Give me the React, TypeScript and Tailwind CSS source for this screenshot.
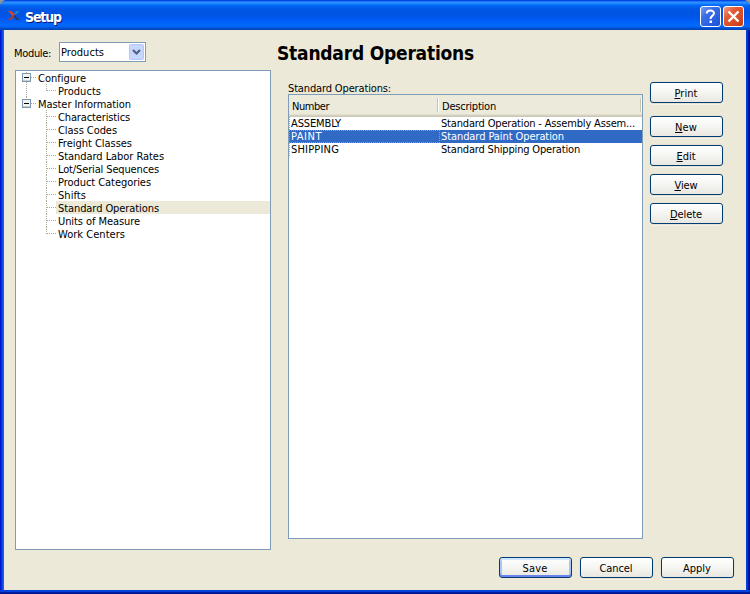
import React from "react";

type FitProps = { w: number; children: React.ReactNode; className?: string };

// Spreads letters evenly so that a label takes up its nominal width.
function Fit({ w, children, className = "" }: FitProps) {
  const ref = React.useRef<HTMLSpanElement>(null);
  const [spacing, setSpacing] = React.useState(0);
  React.useLayoutEffect(() => {
    const el = ref.current;
    if (!el) return;
    const count = (el.textContent ?? "").length;
    setSpacing((w - el.getBoundingClientRect().width) / count);
  }, [w]);
  return (
    <span ref={ref} className={`inline-block whitespace-pre ${className}`} style={{ letterSpacing: spacing }}>
      {children}
    </span>
  );
}

const children: [string, number][] = [
  ["Characteristics", 72],
  ["Class Codes", 59],
  ["Freight Classes", 74],
  ["Standard Labor Rates", 106],
  ["Lot/Serial Sequences", 101],
  ["Product Categories", 93],
  ["Shifts", 28],
  ["Standard Operations", 101],
  ["Units of Measure", 82],
  ["Work Centers", 67],
];

function Group({ label, w, first }: { label: string; w: number; first?: boolean }) {
  return (
    <div className="flex h-[13px]">
      <svg width="22" height="13" className="shrink-0" shapeRendering="crispEdges">
        <path d={first ? "M10.5 1V13" : "M10.5 0V3"} stroke="#aca899" strokeDasharray="1 1" />
        <path d="M15 6.5H20" stroke="#aca899" strokeDasharray="1 1" />
        <rect x="6.5" y="2.5" width="8" height="8" fill="#f4f2ed" stroke="#7898b5" />
        <path d="M7 9.5H14" stroke="#d2cdbf" />
        <path d="M8 6.5H13" stroke="#000" />
      </svg>
      <div className="pt-px">
        <Fit w={w}>{label}</Fit>
      </div>
    </div>
  );
}

function Leaf({ label, w, last, root, selected }: { label: string; w: number; last?: boolean; root?: boolean; selected?: boolean }) {
  return (
    <div className="flex h-[13px]">
      <svg width="40" height="13" className="shrink-0" shapeRendering="crispEdges">
        {root && <path d="M10.5 0V13" stroke="#aca899" strokeDasharray="1 1" />}
        <path d={last ? "M30.5 0V7" : "M30.5 0V13"} stroke="#aca899" strokeDasharray="1 1" />
        <path d="M31 6.5H40" stroke="#aca899" strokeDasharray="1 1" />
      </svg>
      <div className={`h-[13px] grow pl-[2px] pt-px ${selected ? "bg-[#ece9d8]" : ""}`}>
        <Fit w={w}>{label}</Fit>
      </div>
    </div>
  );
}

function Button({ label, w, underline, focus }: { label: string; w: number; underline?: boolean; focus?: boolean }) {
  return (
    <button
      className={`flex h-[21px] w-[73px] shrink-0 justify-center rounded-[3px] border border-[#003c74] bg-linear-to-b from-white via-[#f5f5f2] to-[#e9e7e0] pt-[4px] leading-[13px] ${
        focus
          ? "shadow-[inset_0_2px_0_#cee7ff,inset_0_-2px_0_#6982ee,inset_2px_0_0_#a9c5f5,inset_-2px_0_0_#a9c5f5]"
          : "shadow-[0_0_0_1px_#e6e3d4,0_1px_0_1px_#f4f2e8]"
      }`}
    >
      <Fit w={w} className="-ml-px">
        {underline ? (
          <>
            <span className="underline decoration-1 underline-offset-[1px]">{label[0]}</span>
            {label.slice(1)}
          </>
        ) : (
          label
        )}
      </Fit>
    </button>
  );
}

function TitleBar() {
  return (
    <div className="flex h-[30px] shrink-0 items-start rounded-t-[7px] bg-[linear-gradient(to_bottom,#0831d9_0,#0058ee_1px,#3593ff_2px,#288eff_3px,#127dff_4px,#036ffc_5px,#0262ee_6px,#0057e5_9px,#0054e3_14px,#0055eb_17px,#005bf5_20px,#026afe_25px,#0062ef_27px,#0052d6_28px,#0040ab_30px)]">
      <svg width="14" height="12" viewBox="0 0 14 12" className="ml-[7px] mt-[10px]">
        <path d="M1 1H4.5L8 4.5L6 6.5Z" fill="#d0452c" />
        <path d="M0 10L3 8L6.5 5L8 6.5L4.5 9.5Z" fill="#a8402f" />
        <path d="M9.5 1H12.5L9 4.5L7 4Z" fill="#2287c4" />
        <path d="M7.5 5L10 7L13 10H9.5L6.5 7Z" fill="#253d75" />
      </svg>
      <div className="ml-[4px] mt-[9px] grow font-['DejaVu_Sans_Condensed','DejaVu_Sans',sans-serif] text-[14px] font-bold leading-[16px] text-white [font-stretch:condensed] [text-shadow:1px_1px_#0a1883]">
        <Fit w={36}>Setup</Fit>
      </div>
      <svg width="44" height="21" className="mr-[6px] mt-[6px]">
        <defs>
          <linearGradient id="help" x1="0" y1="0" x2="1" y2="1">
            <stop stopColor="#7da1f3" />
            <stop offset=".35" stopColor="#3a6ee8" />
            <stop offset="1" stopColor="#1c50d6" />
          </linearGradient>
          <linearGradient id="close" x1="0" y1="0" x2="1" y2="1">
            <stop stopColor="#f0a58d" />
            <stop offset=".35" stopColor="#e35b35" />
            <stop offset="1" stopColor="#c83a10" />
          </linearGradient>
        </defs>
        <rect x=".5" y=".5" width="20" height="20" rx="2.5" fill="url(#help)" stroke="#fff" />
        <path d="M6.8 7.5C6.8 3.6 14 3.6 14 7.3C14 9.8 10.5 9.6 10.5 13" fill="none" stroke="#fff" strokeWidth="2" />
        <path d="M9.5 14.5H12V17H9.5Z" fill="#fff" />
        <rect x="23.5" y=".5" width="20" height="20" rx="2.5" fill="url(#close)" stroke="#fff" />
        <path d="M28.5 5.5L38.5 15.5M38.5 5.5L28.5 15.5" stroke="#fff" strokeWidth="2.4" />
      </svg>
    </div>
  );
}

function Row({ a, aw, b, bw, selected }: { a: string; aw: number; b: string; bw: number; selected?: boolean }) {
  return (
    <div className={`flex h-[13px] ${selected ? "bg-[#316ac5] text-white" : ""}`}>
      <div
        className={`w-[150px] shrink-0 border-dotted pl-[1px] ${
          selected ? "-mr-px w-[151px] border border-[#ce953a] leading-[11px]" : "border-l border-[#aaa]"
        }`}
      >
        <Fit w={aw}>{a}</Fit>
      </div>
      <div className="pl-[2px]">
        <Fit w={bw}>{b}</Fit>
      </div>
    </div>
  );
}

export default function App() {
  return (
    <div className="h-[594px] w-[750px] overflow-hidden bg-[#8f9a96]">
      <div className="flex h-[594px] w-[750px] flex-col rounded-t-[7px] bg-[linear-gradient(to_right,#0019cf_0,#0019cf_1px,#0831d9_1px,#0831d9_2px,#0a4be4_2px,#0a4be4_3px,#1663ec_3px,#1663ec_4px,#0441d8_4px,#0441d8_747px,#0037d4_747px,#0037d4_748px,#001da0_748px,#001da0_749px,#00138c_749px)] font-['DejaVu_Sans_Condensed','DejaVu_Sans',sans-serif] text-[11px] leading-[13px] text-black [font-stretch:condensed]">
        <TitleBar />
        <div className="ml-[4px] mr-[4px] flex h-[560px] bg-[#ece9d8]">
          <div className="ml-[11px] flex w-[256px] shrink-0 flex-col">
            <div className="mt-[12px] flex h-[20px]">
              <div className="-ml-px w-[45px] shrink-0 pt-[5px]">
                <Fit w={37}>Module:</Fit>
              </div>
              <div className="flex h-[20px] w-[87px] border border-[#7f9db9] bg-white">
                <div className="grow pl-[1px] pt-[3px]">
                  <Fit w={43}>Products</Fit>
                </div>
                <svg width="16" height="18" className="shrink-0">
                  <rect x=".5" y="1.5" width="14" height="15" rx="1" fill="#c6d6fc" stroke="#b3c8f5" />
                  <path d="M4 7L7.5 10.5L11 7" fill="none" stroke="#4d6185" strokeWidth="2.2" />
                </svg>
              </div>
            </div>
            <div className="mt-[8px] h-[480px] w-[256px] border border-[#7f9db9] bg-white">
              <Group label="Configure" w={48} first />
              <Leaf label="Products" w={43} last root />
              <Group label="Master Information" w={93} />
              {children.map(([label, w]) => (
                <Leaf key={label} label={label} w={w} last={label === "Work Centers"} selected={label === "Standard Operations"} />
              ))}
            </div>
          </div>
          <div className="flex grow flex-col">
            <h1 className="ml-[6px] mt-[11px] h-[24px] font-['DejaVu_Sans_Condensed','DejaVu_Sans',sans-serif] text-[19px] font-bold leading-[24px] [font-stretch:condensed]">
              <Fit w={197}>Standard Operations</Fit>
            </h1>
            <div className="flex">
              <div className="ml-[17px] mt-[17px] w-[355px] shrink-0">
                <div className="h-[12px]">
                  <Fit w={103}>Standard Operations:</Fit>
                </div>
                <div className="h-[445px] border border-[#7f9db9] bg-white">
                  <div className="flex h-[22px] bg-[#ebeadb] pt-[3px] shadow-[inset_0_-1px_#cbc7b8,inset_0_-2px_#d6d2c2,inset_0_-3px_#e2decd]">
                    <div className="h-[14px] w-[150px] shrink-0 border-r border-white pl-[3px] pt-[2px] shadow-[inset_-1px_0_#c7c5b2]">
                      <Fit w={37}>Number</Fit>
                    </div>
                    <div className="h-[14px] grow border-r border-white pl-[3px] pt-[2px] shadow-[inset_-1px_0_#c7c5b2]">
                      <Fit w={54}>Description</Fit>
                    </div>
                  </div>
                  <Row a="ASSEMBLY" aw={50} b="Standard Operation - Assembly Assem..." bw={194} />
                  <Row a="PAINT" aw={31} b="Standard Paint Operation" bw={123} selected />
                  <Row a="SHIPPING" aw={48} b="Standard Shipping Operation" bw={139} />
                </div>
              </div>
              <div className="ml-[7px] mt-[17px] flex flex-col gap-[8px]">
                <div className="mb-[5px] flex">
                  <Button label="Print" w={23} underline />
                </div>
                <Button label="New" w={22} underline />
                <Button label="Edit" w={19} underline />
                <Button label="View" w={23} underline />
                <Button label="Delete" w={32} underline />
              </div>
            </div>
            <div className="ml-[228px] mt-[18px] flex gap-[8px]">
              <Button label="Save" w={25} focus />
              <Button label="Cancel" w={33} />
              <Button label="Apply" w={28} />
            </div>
          </div>
        </div>
        <div className="h-[4px] bg-[linear-gradient(to_bottom,#0441d8_0,#0441d8_2px,#001da0_2px,#001da0_3px,#00138c_3px)]" />
      </div>
    </div>
  );
}
